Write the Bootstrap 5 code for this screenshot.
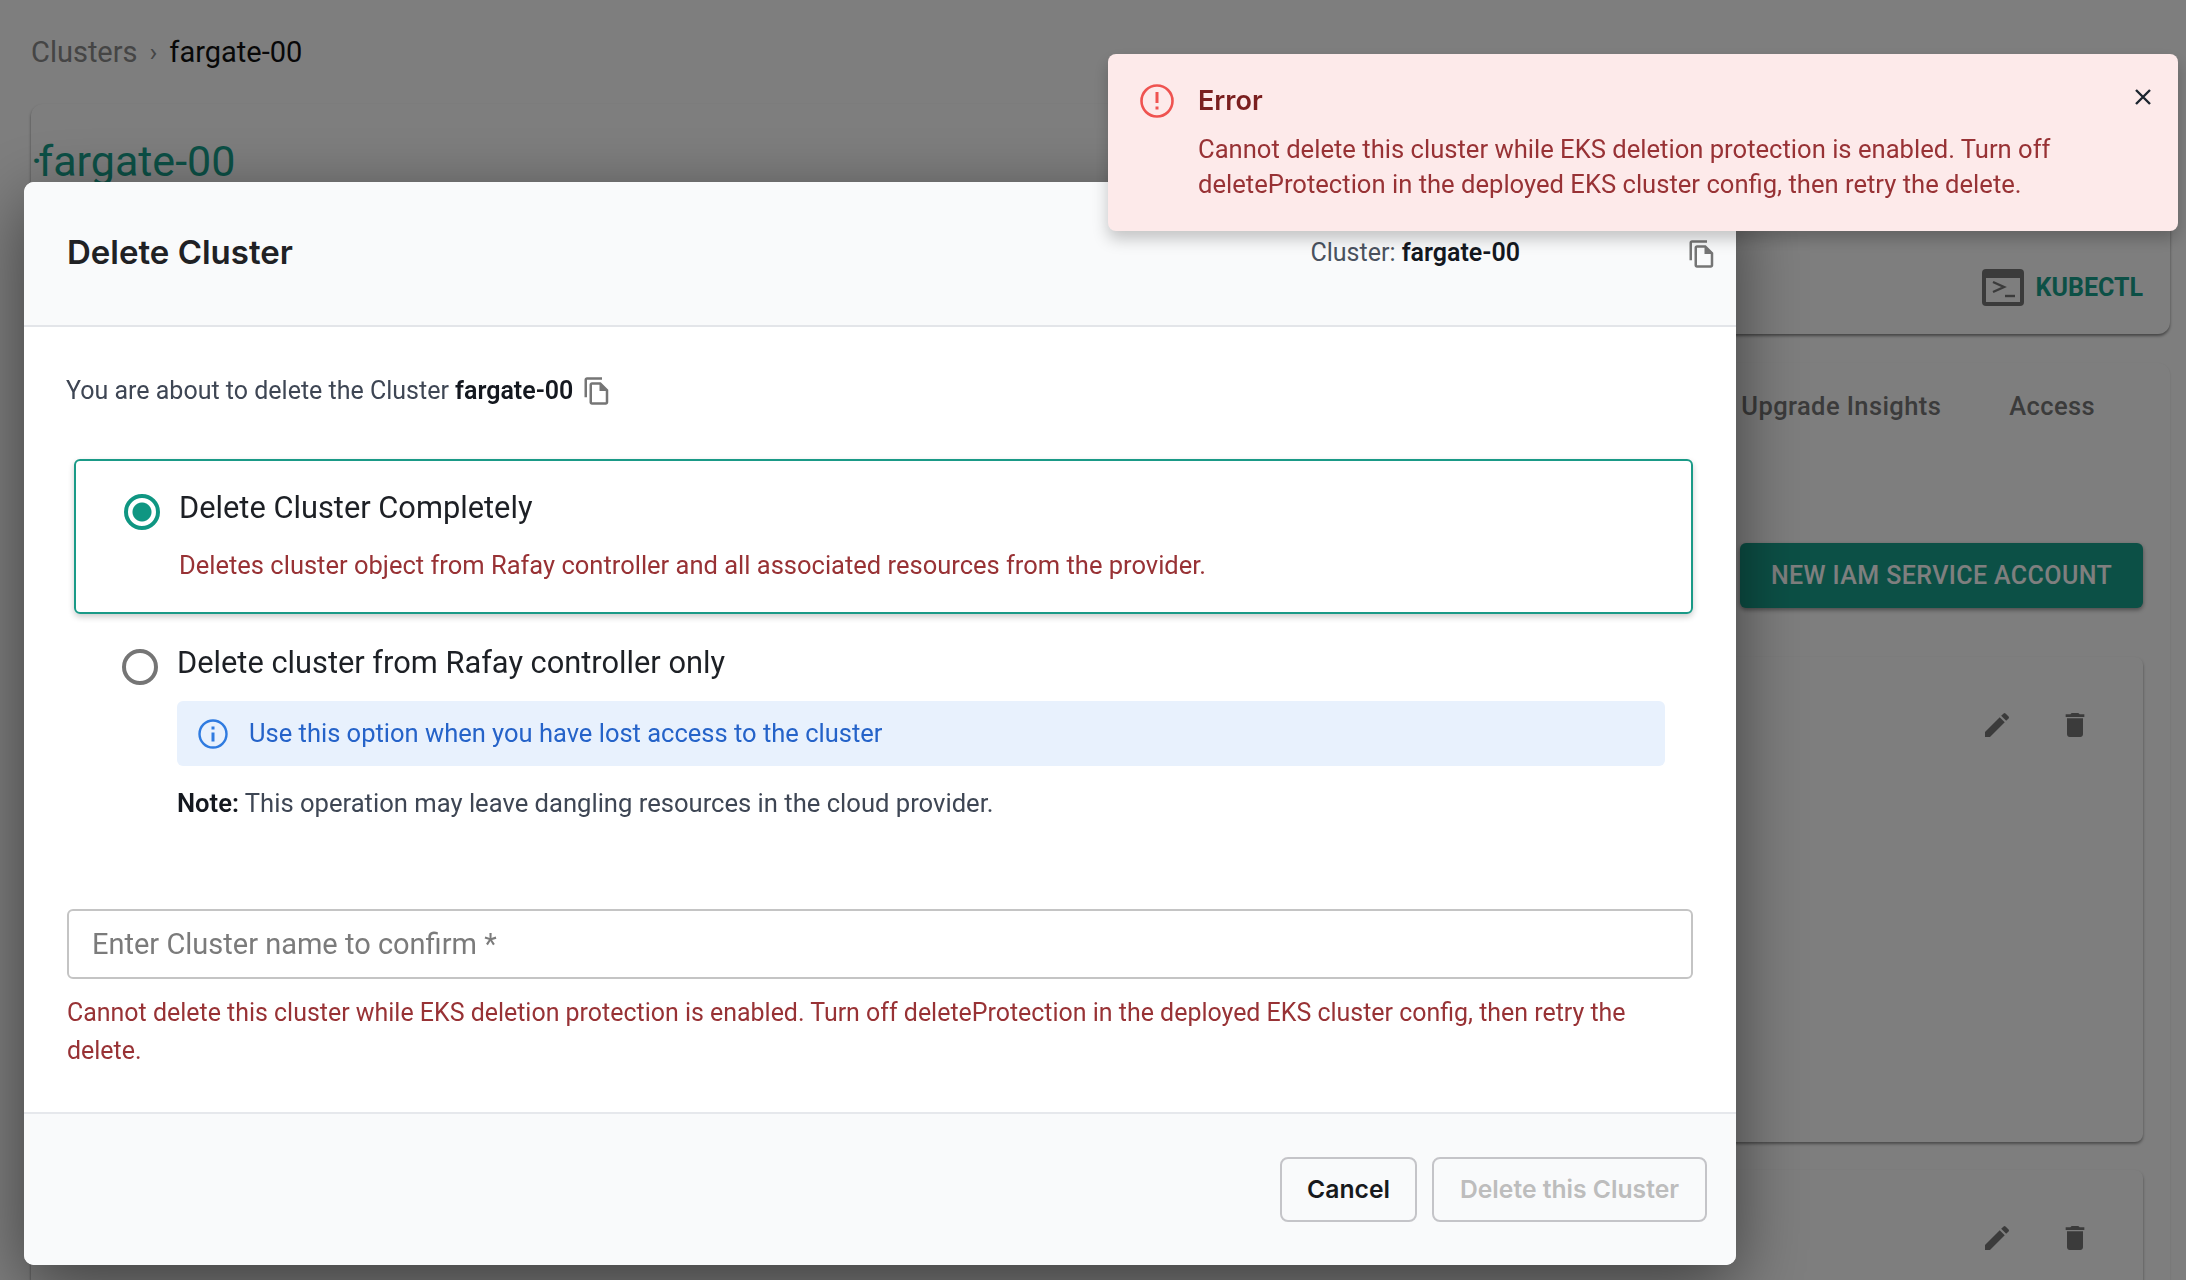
<!DOCTYPE html>
<html lang="en">
<head>
    <meta charset="UTF-8">
    <meta name="viewport" content="width=device-width, initial-scale=1.0">
    <title>Delete Cluster</title>
    <link href="https://cdn.jsdelivr.net/npm/bootstrap@5.3.1/dist/css/bootstrap.min.css" rel="stylesheet">
    <style>
        html, body {
            height: 100%;
            overflow: hidden;
        }

        body {
            background-color: #fcfcfc;
            font-family: Roboto, "Liberation Sans", sans-serif;
            color: #1f2329;
        }

        /* page behind the dialog */
        .page-wrap {
            height: 100vh;
            overflow: hidden;
            display: flex;
            flex-direction: column;
            padding: 33px 16px 0 31px;
        }

        .crumbs {
            font-size: 29px;
            line-height: 38px;
            display: flex;
            align-items: center;
            gap: 12px;
            color: #8a8a8a;
            margin-bottom: 33px;
        }

        .crumbs b {
            font-weight: 400;
            color: #111;
        }

        .crumbs i {
            font-style: normal;
            font-size: 26px;
        }

        .head-card {
            height: 230px;
            flex: none;
            border-radius: 12px;
            background: #fcfcfc;
            box-shadow: 0 2px 3px rgba(0, 0, 0, .45);
            padding: 31px 27px 0 0;
        }

        .head-card h1 {
            font-size: 43px;
            line-height: 52px;
            font-weight: 400;
            color: #18a08c;
            margin: 0;
        }

        .head-dot {
            margin-right: -4px;
        }

        .kube-row {
            display: flex;
            justify-content: flex-end;
            align-items: center;
            gap: 12px;
            margin-top: 82px;
            color: #18a08c;
            font-weight: 700;
            font-size: 25px;
        }

        .tabs-card {
            margin-top: 29px;
            flex: 1;
            min-height: 0;
            display: flex;
            flex-direction: column;
            border-radius: 12px 12px 0 0;
            background: #fcfcfc;
            box-shadow: 0 1px 2px rgba(0, 0, 0, .15);
            padding: 26px 27px 0 0;
        }

        .tabs-row {
            display: flex;
            justify-content: flex-end;
            gap: 68px;
            padding-right: 48px;
            font-size: 25.5px;
            font-weight: 500;
            letter-spacing: .4px;
            line-height: 34px;
            color: #777;
        }

        .new-btn {
            display: block;
            flex: none;
            margin: 120px 0 49px auto;
            width: 403px;
            height: 65px;
            border: 0;
            border-radius: 6px;
            background: #18a08c;
            color: #fff;
            font-size: 25px;
            font-weight: 500;
            letter-spacing: .4px;
            box-shadow: 0 2px 4px rgba(0, 0, 0, .4);
        }

        .row-card {
            height: 485px;
            flex: none;
            border-radius: 8px;
            background: #fcfcfc;
            box-shadow: 0 2px 3px rgba(0, 0, 0, .4);
            display: flex;
            justify-content: flex-end;
            gap: 46px;
            padding: 52px 52px 0 0;
            margin-bottom: 28px;
        }

        .row-card.row-last {
            height: auto;
            flex: 1;
            min-height: 0;
            margin-bottom: 0;
            border-radius: 8px 8px 0 0;
        }

        .row-card svg {
            width: 32px;
            height: 32px;
            fill: #777;
        }

        /* dialog */
        .modal-dialog.del-dialog {
            max-width: none;
            width: 1712px;
            margin: 182px 0 0 24px;
        }

        .del-dialog .modal-content {
            height: 1083px;
            border: 0;
            border-radius: 10px;
            box-shadow: 0 20px 70px rgba(0, 0, 0, .5);
            background: #fff;
        }

        .del-dialog .modal-header {
            height: 145px;
            padding: 0 19px 0 43px;
            background: #f9fafb;
            border-bottom: 2px solid #e3e5e9;
            border-radius: 10px 10px 0 0;
            align-items: center;
        }

        .del-dialog .modal-title {
            font-family: Inter, Roboto, sans-serif;
            font-size: 33px;
            font-weight: 600;
            color: #202124;
            margin-top: -2px;
        }

        .hdr-cluster {
            font-size: 25px;
            color: #4a5260;
            margin-left: auto;
            margin-right: 167px;
            margin-top: -2px;
        }

        .hdr-cluster b, .intro-line b {
            color: #14181f;
            font-weight: 600;
        }

        .copy-ic {
            width: 30px;
            height: 30px;
            fill: #757575;
            flex: none;
        }

        .del-dialog .modal-body {
            padding: 48px 43px 0;
            flex: none;
            height: 787px;
            border-bottom: 2px solid #e6e8ec;
        }

        .intro-line {
            font-size: 25px;
            line-height: 32px;
            color: #3e4654;
            display: flex;
            align-items: center;
            gap: 9px;
            margin-left: -1px;
        }

        .option-on {
            margin: 52px 0 0 7px;
            height: 155px;
            border: 2px solid #1a9a87;
            border-radius: 6px;
            box-shadow: 0 3px 6px rgba(0, 0, 0, .2);
            display: flex;
            gap: 19px;
            padding: 27px 0 0 48px;
        }

        .option-on p {
            font-size: 25.5px;
            line-height: 34px;
            color: #983235;
            margin: 20px 0 0;
        }

        .opt-label {
            font-size: 30.8px;
            line-height: 40px;
            color: #1d2025;
        }

        .radio-dot.form-check-input {
            width: 36px;
            height: 36px;
            margin: 6px 0 0;
            flex: none;
            background: #fff;
            border: 4px solid #757575;
            box-shadow: none;
        }

        .radio-dot.form-check-input:checked {
            border-color: #0f9682;
            background: radial-gradient(circle, #0f9682 0 9px, #fff 10px);
        }

        .option-off {
            margin: 29px 28px 0 55px;
            display: flex;
            gap: 19px;
        }

        .option-off .opt-inner {
            flex: 1;
        }

        .info-box {
            margin-top: 18px;
            height: 65px;
            background: #e8f1fd;
            border-radius: 6px;
            color: #2563c9;
            font-size: 25.5px;
            display: flex;
            align-items: center;
            gap: 20px;
            padding-left: 20px;
        }

        .info-box svg {
            width: 32px;
            height: 32px;
            flex: none;
        }

        .note-line {
            font-size: 25.6px;
            line-height: 34px;
            color: #3e4654;
            margin: 20px 0 0;
        }

        .note-line b {
            color: #14181f;
            font-weight: 600;
        }

        .confirm-input.form-control {
            margin-top: 89px;
            height: 70px;
            border: 2px solid #c4c4c4;
            border-radius: 6px;
            font-size: 29px;
            padding: 0 23px;
            color: #222;
        }

        .confirm-input.form-control::placeholder {
            color: #7b7b7b;
        }

        .err-line {
            color: #983235;
            font-size: 24.95px;
            line-height: 38px;
            margin: 15px 0 0;
        }

        .del-dialog .modal-footer {
            flex: 1;
            background: #f9fafb;
            padding: 43px 29px 0 0;
            border: 0;
            align-items: flex-start;
            gap: 15px;
            border-radius: 0 0 10px 10px;
        }

        .del-dialog .modal-footer .btn {
            margin: 0;
            height: 65px;
            font-size: 24.7px;
            font-weight: 600;
            font-family: Inter, Roboto, sans-serif;
            border: 2px solid #c4c4c8;
            border-radius: 8px;
            background: transparent;
        }

        .btn-cancel {
            width: 137px;
            color: #17191c;
        }

        .btn-gone {
            width: 275px;
            color: #bdbdbd;
        }

        /* error toast */
        .err-toast.alert {
            position: fixed;
            z-index: 1060;
            top: 54px;
            left: 1108px;
            width: 1070px;
            height: 177px;
            margin: 0;
            padding: 29px 0 0 31px;
            border: 0;
            border-radius: 8px;
            background: #fdeaea;
            box-shadow: 0 8px 16px rgba(0, 0, 0, .22);
            display: flex;
            gap: 23px;
        }

        .err-toast .err-ic {
            width: 36px;
            height: 36px;
            flex: none;
        }

        .err-toast h6 {
            font-family: Inter, Roboto, sans-serif;
            font-size: 27px;
            line-height: 36px;
            font-weight: 600;
            color: #7a1f1f;
            margin: 0 0 13px;
        }

        .err-toast p {
            font-size: 25.6px;
            line-height: 35px;
            color: #983235;
            margin: 0;
        }

        .toast-x {
            position: absolute;
            right: 23px;
            top: 31px;
            width: 24px;
            height: 24px;
            stroke: #1d2630;
            stroke-width: 2.4;
        }
    </style>
</head>
<body>

    <!-- page behind the dialog -->
    <div class="page-wrap">
        <div class="crumbs"><span>Clusters</span><i>›</i><b>fargate-00</b></div>
        <div class="head-card">
            <h1><span class="head-dot">·</span>fargate-00</h1>
            <div class="kube-row">
                <svg width="42" height="37" viewBox="0 0 42 37"><rect width="42" height="37" rx="4" fill="#777"/><rect x="4" y="9" width="34" height="24" fill="#fcfcfc"/><path d="M11 13l11 5-11 5" fill="none" stroke="#777" stroke-width="2.4"/><path d="M23 27h10" stroke="#777" stroke-width="2.4"/></svg>
                <span>KUBECTL</span>
            </div>
        </div>
        <div class="tabs-card">
            <div class="tabs-row"><span>Upgrade Insights</span><span>Access</span></div>
            <button class="new-btn" type="button">NEW IAM SERVICE ACCOUNT</button>
            <div class="row-card">
                <svg viewBox="0 0 24 24"><path d="M3 17.25V21h3.75L17.81 9.94l-3.75-3.75L3 17.25zM20.71 7.04c.39-.39.39-1.02 0-1.41l-2.34-2.34a.9959.9959 0 0 0-1.41 0l-1.83 1.83 3.75 3.75 1.83-1.83z"/></svg>
                <svg viewBox="0 0 24 24"><path d="M6 19c0 1.1.9 2 2 2h8c1.1 0 2-.9 2-2V7H6v12zM19 4h-3.5l-1-1h-5l-1 1H5v2h14V4z"/></svg>
            </div>
            <div class="row-card row-last">
                <svg viewBox="0 0 24 24"><path d="M3 17.25V21h3.75L17.81 9.94l-3.75-3.75L3 17.25zM20.71 7.04c.39-.39.39-1.02 0-1.41l-2.34-2.34a.9959.9959 0 0 0-1.41 0l-1.83 1.83 3.75 3.75 1.83-1.83z"/></svg>
                <svg viewBox="0 0 24 24"><path d="M6 19c0 1.1.9 2 2 2h8c1.1 0 2-.9 2-2V7H6v12zM19 4h-3.5l-1-1h-5l-1 1H5v2h14V4z"/></svg>
            </div>
        </div>
    </div>

    <div class="modal-backdrop show"></div>

    <!-- Delete dialog -->
    <div class="modal d-block">
        <div class="modal-dialog del-dialog">
            <div class="modal-content">
                <div class="modal-header">
                    <h5 class="modal-title">Delete Cluster</h5>
                    <div class="hdr-cluster">Cluster: <b>fargate-00</b></div>
                    <svg class="copy-ic" viewBox="0 0 24 24"><path d="M16 1H4c-1.1 0-2 .9-2 2v14h2V3h12V1zm-1 4H8c-1.1 0-1.99.9-1.99 2L6 21c0 1.1.89 2 1.99 2H19c1.1 0 2-.9 2-2V11l-6-6zM8 21V7h6v5h5v9H8z"/></svg>
                </div>
                <div class="modal-body">
                    <div class="intro-line">
                        <span>You are about to delete the Cluster <b>fargate-00</b></span>
                        <svg class="copy-ic" viewBox="0 0 24 24"><path d="M16 1H4c-1.1 0-2 .9-2 2v14h2V3h12V1zm-1 4H8c-1.1 0-1.99.9-1.99 2L6 21c0 1.1.89 2 1.99 2H19c1.1 0 2-.9 2-2V11l-6-6zM8 21V7h6v5h5v9H8z"/></svg>
                    </div>

                    <div class="option-on">
                        <input class="form-check-input radio-dot" type="radio" name="delMode" checked>
                        <div>
                            <div class="opt-label">Delete Cluster Completely</div>
                            <p>Deletes cluster object from Rafay controller and all associated resources from the provider.</p>
                        </div>
                    </div>

                    <div class="option-off">
                        <input class="form-check-input radio-dot" type="radio" name="delMode">
                        <div class="opt-inner">
                            <div class="opt-label">Delete cluster from Rafay controller only</div>
                            <div class="info-box">
                                <svg viewBox="0 0 32 32" fill="none" stroke="#2f7be0" stroke-width="2.4"><circle cx="16" cy="16" r="13.5"/><path d="M16 14.5v9" stroke-width="3"/><path d="M16 8.5v3" stroke-width="3"/></svg>
                                <span>Use this option when you have lost access to the cluster</span>
                            </div>
                            <p class="note-line"><b>Note:</b> This operation may leave dangling resources in the cloud provider.</p>
                        </div>
                    </div>

                    <input class="form-control confirm-input" type="text" placeholder="Enter Cluster name to confirm *">
                    <p class="err-line">Cannot delete this cluster while EKS deletion protection is enabled. Turn off deleteProtection in the deployed EKS cluster config, then retry the delete.</p>
                </div>
                <div class="modal-footer">
                    <button class="btn btn-cancel" type="button">Cancel</button>
                    <button class="btn btn-gone" type="button">Delete this Cluster</button>
                </div>
            </div>
        </div>
    </div>

    <!-- Error toast -->
    <div class="alert err-toast" role="alert">
        <svg class="err-ic" viewBox="0 0 36 36" fill="none" stroke="#ef5350" stroke-width="2.6"><circle cx="18" cy="18" r="15.5"/><path d="M18 9v11" stroke-width="3"/><path d="M18 23.5v3" stroke-width="3"/></svg>
        <div>
            <h6>Error</h6>
            <p>Cannot delete this cluster while EKS deletion protection is enabled. Turn off<br>deleteProtection in the deployed EKS cluster config, then retry the delete.</p>
        </div>
        <svg class="toast-x" viewBox="0 0 24 24"><path d="M5 5l14 14M19 5L5 19"/></svg>
    </div>

</body>
</html>
